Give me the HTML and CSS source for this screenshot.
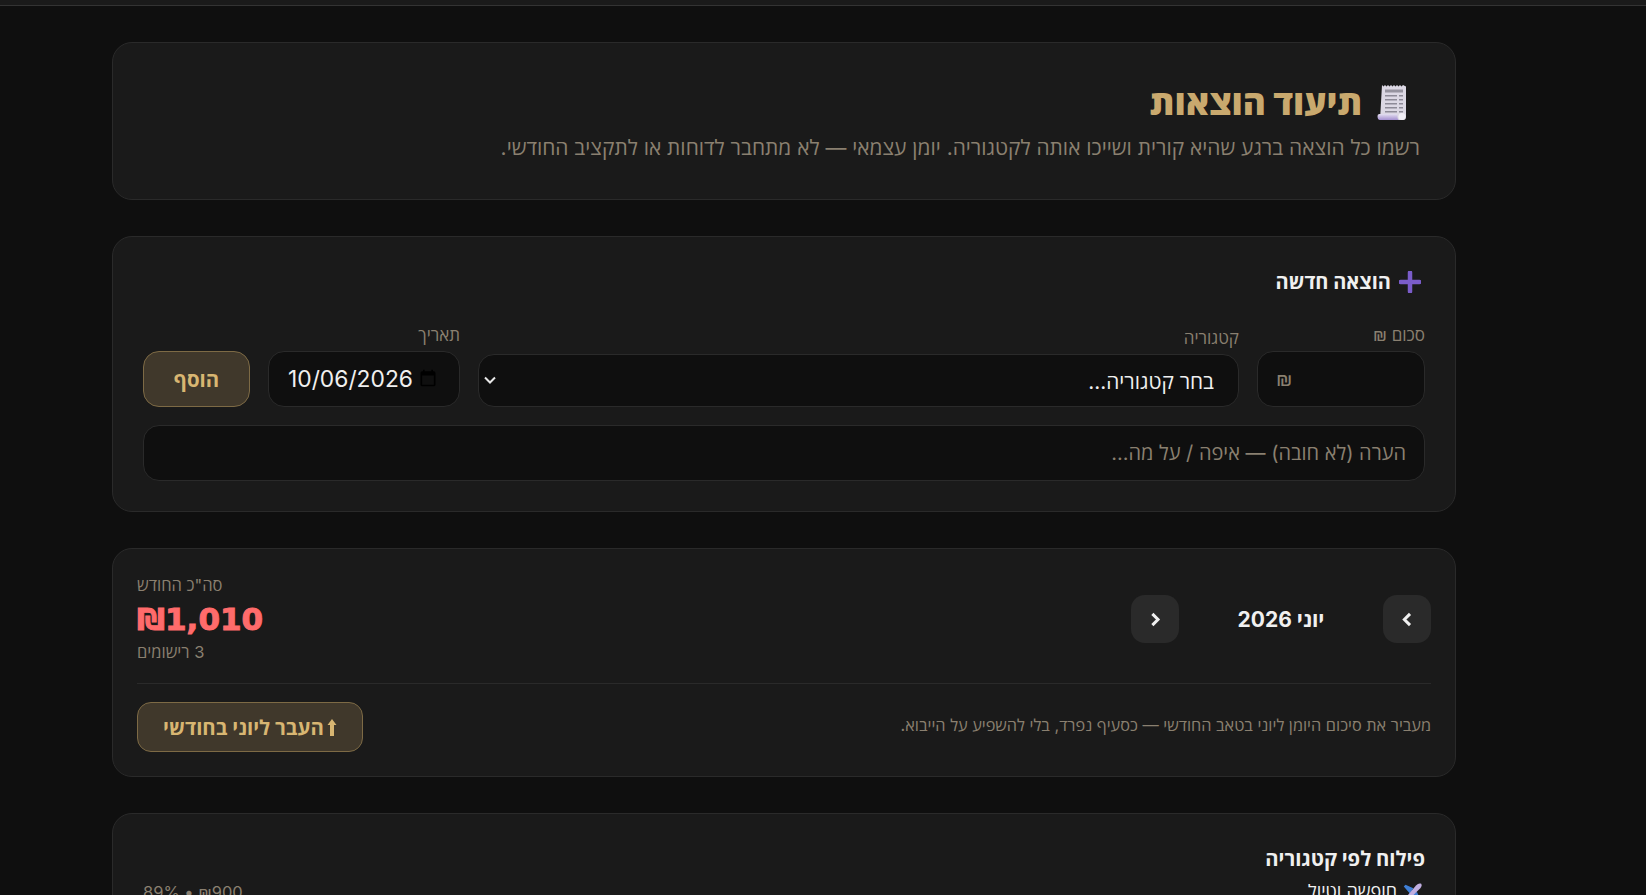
FILE: index.html
```html
<!DOCTYPE html>
<html lang="he" dir="rtl">
<head>
    <meta charset="UTF-8">
    <title>תיעוד הוצאות</title>
    <link rel="stylesheet" href="styles.css">
</head>
<body>

<div class="topbar"></div>

<main>
    <section class="card intro">
        <h1>
            <svg class="receipt" viewBox="0 0 30 36" width="30" height="36">
                <defs>
                    <linearGradient id="curl" x1="0" y1="0" x2="0" y2="1">
                        <stop offset="0" stop-color="#e4dff0"/>
                        <stop offset="1" stop-color="#a48fd0"/>
                    </linearGradient>
                </defs>
                <path d="M5 1l1.500 1.500L8 1l1.500 1.500L11 1l1.500 1.500L14 1l1.500 1.500L17 1l1.500 1.500L20 1l1.500 1.500L23 1l1.500 1.500L26 1l3 1.500V33q0 3-3 3H3z" fill="#dcd8e4"/>
                <path d="M.5 32q0-2 2-2h17q1 0 1 3t2 3H3q-2.500 0-2.500-4z" fill="url(#curl)"/>
                <circle cx="25" cy="32.500" r="3.500" fill="#f1eef6"/>
                <path d="M8 5.500h18v3H8z" fill="#96939f"/>
                <path d="M8 11h12v1.500H8zM22 11h4v1.500h-4zM8 15h12v1.500H8zM22 15h4v1.500h-4zM8 19h12v1.500H8zM22 19h4v1.500h-4zM8 23h12v1.500H8zM22 23h4v1.500h-4zM8 27h12v1.500H8zM22 27h4v1.500h-4z" fill="#8d8a97"/>
            </svg>
            תיעוד הוצאות
        </h1>
        <p>רשמו כל הוצאה ברגע שהיא קורית ושייכו אותה לקטגוריה. יומן עצמאי — לא מתחבר לדוחות או לתקציב החודשי.</p>
    </section>

    <section class="card new-expense">
        <h2>
            <svg class="plus" viewBox="0 0 22 22" width="22" height="22">
                <path d="M11 1.500v19M1.500 11h19" stroke="#7a5cc9" stroke-width="4.500" stroke-linecap="round"/>
            </svg>
            הוצאה חדשה
        </h2>
        <form class="expense-form">
            <div class="form-row">
                <div class="field field-amount">
                    <label for="amount">סכום ₪</label>
                    <input id="amount" type="text" class="control amount" placeholder="₪">
                </div>
                <div class="field field-category">
                    <label for="category">קטגוריה</label>
                    <div class="select-wrap">
                        <select id="category" class="control">
                            <option>בחר קטגוריה...</option>
                        </select>
                        <svg class="chevron" viewBox="0 0 14 14" width="14" height="14">
                            <path d="M2 4.500l5 5 5-5" fill="none" stroke="#e8e8e8" stroke-width="2"/>
                        </svg>
                    </div>
                </div>
                <div class="field field-date">
                    <label for="date">תאריך</label>
                    <div class="control date-control" id="date">
                        <span>10/06/2026</span>
                        <svg viewBox="0 0 24 24" width="20" height="20">
                            <path d="M19 4h-1V2h-2v2H8V2H6v2H5a2 2 0 0 0-2 2v14a2 2 0 0 0 2 2h14a2 2 0 0 0 2-2V6a2 2 0 0 0-2-2zm0 16H5V9h14z" fill="#000"/>
                        </svg>
                    </div>
                </div>
                <button type="button" class="gold-btn add-btn">הוסף</button>
            </div>
            <input type="text" class="control note" placeholder="הערה (לא חובה) — איפה / על מה...">
        </form>
    </section>

    <section class="card summary">
        <div class="summary-top">
            <div class="month-nav">
                <button type="button" class="nav-btn">
                    <svg viewBox="0 0 12 12" width="15" height="15"><path d="M8 1.500L3.500 6 8 10.500" fill="none" stroke="#f0f0f0" stroke-width="2.400"/></svg>
                </button>
                <div class="month-name">יוני 2026</div>
                <button type="button" class="nav-btn">
                    <svg viewBox="0 0 12 12" width="15" height="15"><path d="M3.500 1.500L8 6 3.500 10.500" fill="none" stroke="#f0f0f0" stroke-width="2.400"/></svg>
                </button>
            </div>
            <div class="totals">
                <div class="totals-label">סה"כ החודש</div>
                <div class="totals-value">₪1,010</div>
                <div class="totals-count">3 רישומים</div>
            </div>
        </div>
        <div class="summary-bottom">
            <p>מעביר את סיכום היומן ליוני בטאב החודשי — כסעיף נפרד, בלי להשפיע על הייבוא.</p>
            <button type="button" class="gold-btn move-btn">
                <svg viewBox="0 0 10 17" width="10" height="17"><path d="M5 0l4.500 6H7v11H3V6H.5z" fill="#d8b672"/></svg>
                העבר ליוני בחודשי
            </button>
        </div>
    </section>

    <section class="card breakdown">
        <h3>פילוח לפי קטגוריה</h3>
        <div class="cat-row">
            <span class="cat-name">
                <svg viewBox="0 0 24 24" width="21" height="21">
                    <path d="M13 7L4 3 2 5l7 8zM17 11l4 9-2 2-8-7z" fill="#3f7fd6"/>
                    <path d="M22 2c1 2 0 4-2 6L8 20l-6 3 3-6L16 4c2-2 4-3 6-2z" fill="#c0aee0"/>
                </svg>
                חופשה וטיול
            </span>
            <span class="cat-value">₪900 • 89%</span>
        </div>
    </section>
</main>

</body>
</html>
```

FILE: styles.css
```css
* {
    box-sizing: border-box;
}

html, body {
    height: 100%;
    overflow: hidden;
}

body {
    margin: 0;
    background-color: #0f0f0f;
    color: #f0f0f0;
    font-family: Inter, "Open Sans", "Liberation Sans", sans-serif;
}

.topbar {
    height: 6px;
    background-color: #1a1a1a;
    border-bottom: 1px solid #333;
}

main {
    padding: 36px 190px 0 112px;
    display: flex;
    flex-direction: column;
    gap: 36px;
}

.card {
    background-color: #1a1a1a;
    border: 1px solid #2a2a2a;
    border-radius: 20px;
}

/* header card */
.intro {
    height: 158px;
    padding: 38px 35px 0;
}

h1 {
    margin: 0;
    padding-right: 13px;
    display: flex;
    align-items: center;
    gap: 15px;
    color: #c9a96e;
    font-size: 35px;
    font-weight: 800;
    line-height: 42px;
}

.intro p {
    margin: 10px 0 0;
    color: #8a8070;
    font-size: 20.900px;
    line-height: 30px;
}

/* new expense */
.new-expense {
    height: 276px;
    padding: 31px 30px 30px;
}

h2 {
    margin: 0 0 29px;
    padding-right: 4px;
    display: flex;
    align-items: center;
    gap: 8px;
    font-size: 20px;
    font-weight: 700;
    line-height: 28px;
}

.expense-form {
    display: flex;
    flex-direction: column;
    gap: 18px;
}

.form-row {
    display: flex;
    align-items: flex-end;
    gap: 18px;
}

.field {
    display: flex;
    flex-direction: column;
}

.field label {
    color: #8a8070;
    font-size: 17px;
    line-height: 20px;
    margin-bottom: 6px;
}

.field-amount {
    width: 168px;
}

.field-category {
    flex: 1;
}

.field-date {
    width: 192px;
}

.control {
    width: 100%;
    height: 56px;
    padding: 0 18px;
    background-color: #0f0f0f;
    border: 1px solid #2a2a2a;
    border-radius: 16px;
    color: #f0f0f0;
    font-family: inherit;
    font-size: 20px;
    outline: none;
}

.control::placeholder {
    color: #8a8070;
}

.amount {
    direction: ltr;
}

.field-category .control {
    height: 53px;
    padding: 2px 24px 0;
    font-size: 20.800px;
    appearance: none;
}

.select-wrap {
    position: relative;
}

.chevron {
    position: absolute;
    left: 5px;
    top: 19px;
}

.date-control {
    display: flex;
    align-items: center;
    justify-content: space-between;
    direction: ltr;
    font-size: 22.800px;
    padding: 0 21px 2px 19px;
}

.gold-btn {
    background-color: #40382b;
    border: 1px solid #7d6a45;
    color: #d8b672;
    font-family: inherit;
    font-size: 20.400px;
    font-weight: 700;
}

.add-btn {
    width: 107px;
    height: 56px;
    border-radius: 16px;
}

/* monthly summary */
.summary {
    height: 229px;
    padding: 24px;
}

.summary-top {
    display: flex;
    justify-content: space-between;
    align-items: flex-start;
    padding-top: 1px;
    padding-bottom: 20px;
    border-bottom: 1px solid #2a2a2a;
}

.month-nav {
    display: flex;
    align-items: center;
    width: 300px;
    justify-content: space-between;
    margin-top: 21px;
}

.nav-btn {
    width: 48px;
    height: 48px;
    display: flex;
    align-items: center;
    justify-content: center;
    background-color: #2a2a2a;
    border: none;
    border-radius: 14px;
}

.month-name {
    font-size: 21px;
    font-weight: 700;
}

.totals {
    display: flex;
    flex-direction: column;
    align-items: flex-end;
}

.totals-label, .totals-count {
    color: #8a8070;
    font-size: 16.500px;
    line-height: 22px;
}

.totals-value {
    margin-top: 1px;
    color: #ff6b6b;
    font-family: "DejaVu Sans", sans-serif;
    font-size: 31px;
    font-weight: 700;
    line-height: 44px;
    -webkit-text-stroke: 1px #ff6b6b;
}

.summary-bottom {
    display: flex;
    justify-content: space-between;
    align-items: center;
    margin-top: 18px;
}

.summary-bottom p {
    margin: 0 0 5px;
    color: #8a8070;
    font-size: 16.300px;
}

.move-btn {
    width: 226px;
    height: 50px;
    border-radius: 14px;
    white-space: nowrap;
    display: flex;
    align-items: center;
    justify-content: center;
    gap: 3px;
}

/* by category */
.breakdown {
    height: 200px;
    padding: 31px 30px;
}

h3 {
    margin: 0;
    font-size: 20.300px;
    font-weight: 700;
    line-height: 28px;
}

.cat-row {
    display: flex;
    justify-content: space-between;
    margin-top: 7px;
    font-size: 18px;
    line-height: 24px;
}

.cat-name {
    display: flex;
    align-items: center;
    gap: 5px;
    padding-right: 2px;
}

.cat-value {
    color: #8a8070;
    font-size: 16.500px;
}
```
